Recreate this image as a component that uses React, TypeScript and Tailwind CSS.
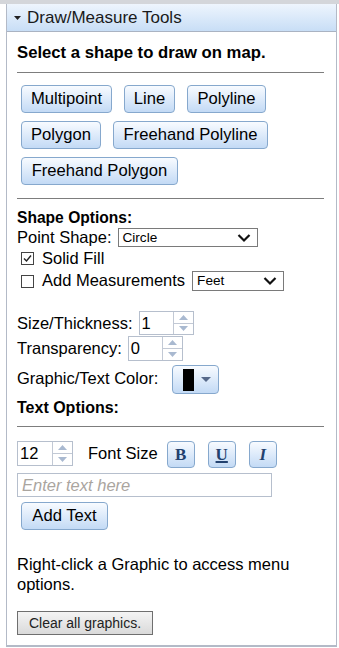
import type { ReactNode } from "react";

const font = { fontFamily: '"Liberation Sans", Arial, sans-serif' };

function BlueButton({ children, className = "" }: { children: ReactNode; className?: string }) {
  return (
    <button
      className={`flex h-[28px] items-center justify-center whitespace-nowrap rounded-[4px] border border-[#86a8cd] bg-linear-to-b from-[#f8fbff] to-[#c3daf5] px-0 text-[16.6px] leading-none text-black ${className}`}
    >
      {children}
    </button>
  );
}

function Chevron() {
  return (
    <svg width="14" height="9" viewBox="0 0 14 9" className="absolute right-[6px] top-1/2 -translate-y-1/2">
      <polyline points="1.5,1.5 7,7 12.5,1.5" fill="none" stroke="#111" strokeWidth="2.2" />
    </svg>
  );
}

function Select({ value, className }: { value: string; className: string }) {
  return (
    <div className={`relative border border-[#7a7a7a] bg-white ${className}`}>
      <span className="absolute left-[4px] top-1/2 -translate-y-1/2 text-[13.6px] leading-none">{value}</span>
      <Chevron />
    </div>
  );
}

function Spinner({ value, textW, h }: { value: string; textW: string; h: string }) {
  return (
    <div className={`flex border border-[#b6bfcd] bg-white ${h}`}>
      <div className={`flex items-center pl-[2px] text-[16.5px] leading-none ${textW}`}>{value}</div>
      <div className="flex w-[20px] flex-col border-l border-[#c2c9d5]">
        <div className="flex flex-1 items-center justify-center border-b border-[#c2c9d5]">
          <svg width="9" height="5" viewBox="0 0 9 5">
            <polygon points="0,5 4.5,0 9,5" fill="#a9b9d0" />
          </svg>
        </div>
        <div className="flex flex-1 items-center justify-center">
          <svg width="9" height="5" viewBox="0 0 9 5">
            <polygon points="0,0 4.5,5 9,0" fill="#a9b9d0" />
          </svg>
        </div>
      </div>
    </div>
  );
}

function Check({ checked }: { checked?: boolean }) {
  return (
    <span className="ml-[4px] flex h-[13px] w-[13px] shrink-0 items-center justify-center border border-[#444] bg-white">
      {checked && (
        <svg width="9" height="9" viewBox="0 0 9 9">
          <polyline points="1,4.5 3.5,7 8,1.5" fill="none" stroke="#222" strokeWidth="1.4" />
        </svg>
      )}
    </span>
  );
}

function StyleButton({ children }: { children: ReactNode }) {
  return (
    <button
      className="flex h-[27px] w-[28px] items-center justify-center rounded-[4px] border border-[#86a8cd] bg-linear-to-b from-[#f8fbff] to-[#c3daf5] text-[17px] font-bold leading-none text-[#22416f]"
      style={{ fontFamily: '"Liberation Serif", "Times New Roman", serif' }}
    >
      {children}
    </button>
  );
}

export default function App() {
  return (
    <div className="h-[648px] w-[339px] bg-white text-black" style={font}>
      <div className="h-[4px] bg-[#d4d6da]" />
      <div className="ml-[6px] w-[331px] border-x border-b-2 border-[#b3bac7]">
        <div className="flex h-[28px] items-center border-b border-[#aab3c2] bg-linear-to-b from-[#eef5fd] to-[#c8def6] pl-[7px] text-[17px] leading-none text-[#1a1a1a]">
          <svg width="7" height="4" viewBox="0 0 7 4" className="mr-[6px]">
            <polygon points="0,0 7,0 3.5,4" fill="#222" />
          </svg>
          Draw/Measure Tools
        </div>

        <div className="flex flex-col pb-[10px] pl-[10px] pr-[12px] text-[16.5px]">
          <div className="mt-[11px] text-[16.7px] font-bold leading-[20px]">Select a shape to draw on map.</div>
          <div className="mt-[9px] h-px bg-[#7d7d7d]" />

          <div className="mt-[12px] flex flex-wrap gap-x-[12px] gap-y-[8px] pl-[4px] pr-[40px]">
            <BlueButton className="w-[91px]">Multipoint</BlueButton>
            <BlueButton className="w-[51px]">Line</BlueButton>
            <BlueButton className="w-[79px]">Polyline</BlueButton>
            <BlueButton className="w-[80px]">Polygon</BlueButton>
            <BlueButton className="w-[155px]">Freehand Polyline</BlueButton>
            <BlueButton className="w-[157px]">Freehand Polygon</BlueButton>
          </div>

          <div className="mt-[13px] h-px bg-[#7d7d7d]" />
          <div className="mt-[10px] text-[15.6px] font-bold leading-[17px]">Shape Options:</div>

          <div className="mt-[2px] flex h-[19px] items-center leading-[19px]">
            <span>Point Shape:</span>
            <Select value="Circle" className="ml-[6px] h-[19px] w-[140px]" />
          </div>

          <div className="mt-[1px] flex h-[20px] items-center gap-[8px] leading-[20px]">
            <Check checked />
            <span>Solid Fill</span>
          </div>

          <div className="mt-[3px] flex h-[20px] items-center leading-[18px]">
            <Check />
            <span className="ml-[8px] -translate-y-[1px]">Add Measurements</span>
            <Select value="Feet" className="ml-[7px] h-[20px] w-[92px]" />
          </div>

          <div className="mt-[20px] flex h-[24px] items-center">
            <span>Size/Thickness:</span>
            <div className="ml-[6px]">
              <Spinner value="1" textW="w-[33px]" h="h-[24px]" />
            </div>
          </div>
          <div className="mt-[1px] flex h-[25px] items-center">
            <span>Transparency:</span>
            <div className="ml-[6px]">
              <Spinner value="0" textW="w-[33px]" h="h-[25px]" />
            </div>
          </div>

          <div className="mt-[4px] flex h-[29px] items-center">
            <span className="-translate-y-[1px]">Graphic/Text Color:</span>
            <button className="ml-[14px] flex h-[29px] w-[47px] items-center rounded-[4px] border border-[#86a8cd] bg-linear-to-b from-[#f8fbff] to-[#c3daf5] pl-[10px]">
              <span className="h-[22px] w-[11px] bg-black" />
              <svg width="10" height="5" viewBox="0 0 10 5" className="ml-[7px]">
                <polygon points="0,0 10,0 5,5" fill="#56698a" />
              </svg>
            </button>
          </div>

          <div className="mt-[5px] text-[16px] font-bold leading-[18px]">Text Options:</div>
          <div className="mt-[9px] h-px bg-[#7d7d7d]" />

          <div className="mt-[14px] flex h-[27px] items-start">
            <Spinner value="12" textW="w-[34px]" h="h-[25px]" />
            <span className="ml-[15px] mt-[2px] leading-[20px]">Font Size</span>
            <div className="ml-[9px] flex gap-[13px]">
              <StyleButton>B</StyleButton>
              <StyleButton>
                <span className="underline decoration-[1.5px] underline-offset-[1px]">U</span>
              </StyleButton>
              <StyleButton>
                <span className="italic">I</span>
              </StyleButton>
            </div>
          </div>

          <div className="mt-[5px] flex h-[24px] w-[255px] items-center border border-[#b6bfcd] pl-[4px] italic text-[#aaa59f]">
            Enter text here
          </div>

          <BlueButton className="ml-[4px] mt-[5px] w-[87px]">Add Text</BlueButton>

          <div className="mt-[24px] leading-[20px]">Right-click a Graphic to access menu options.</div>

          <button className="mt-[17px] flex h-[24px] w-[136px] items-center justify-center border border-[#6f6f6f] bg-linear-to-b from-[#f4f4f4] to-[#dadada] text-[14px] leading-none text-[#222]">
            Clear all graphics.
          </button>
        </div>
      </div>
    </div>
  );
}
